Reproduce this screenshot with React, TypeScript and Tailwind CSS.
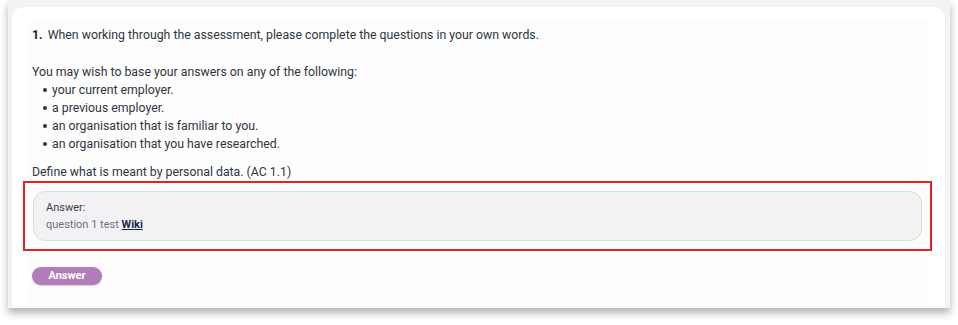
import React from "react";

const items = [
  "your current employer.",
  "a previous employer.",
  "an organisation that is familiar to you.",
  "an organisation that you have researched.",
];

export default function App() {
  return (
    <div className="w-[958px] h-[325px] bg-white" style={{ fontFamily: "Roboto, 'Liberation Sans', sans-serif" }}>
      <div className="ml-[8px] w-[942px] h-[308px] bg-[#f2f3f5] pt-[7px] pl-[4px] pr-[5px] shadow-[0_5px_8px_rgba(0,0,0,0.3)]">
        <div className="h-full bg-white rounded-t-[12px] pt-[14px] px-[15px]">
          <div className="h-full bg-[#fdfdfd] px-[5px] pt-[5px] text-[12.3px] leading-[18px] text-[#2f3640]">
            <p>
              <span className="font-bold text-[#1f2328]">1.</span>
              <span className="ml-[5px]">When working through the assessment, please complete the questions in your own words.</span>
            </p>
            <p className="mt-[19px]">You may wish to base your answers on any of the following:</p>
            <ul>
              {items.map((t) => (
                <li key={t} className="flex items-center">
                  <span className="ml-[11px] mr-[5px] w-[4px] h-[4px] rounded-full bg-[#2f3640]" />
                  <span>{t}</span>
                </li>
              ))}
            </ul>
            <p className="mt-[10px]">Define what is meant by personal data. (AC 1.1)</p>
            <div className="-ml-[9px] -mr-[7px] border-2 border-[#e8202a] px-[8px] pt-[8px] pb-[8px]">
              <div className="rounded-[12px] border border-[#dcdde0] bg-[#f2f2f4] px-[12px] pt-[7px] pb-[7px] text-[11px] leading-[17px]">
                <div className="text-[#3c4047]">Answer:</div>
                <div className="text-[#6b7380]">
                  question 1 test{" "}
                  <a className="font-bold underline text-[#1c2a4d]">Wiki</a>
                </div>
              </div>
            </div>
            <button className="mt-[16px] w-[70px] h-[18px] rounded-full bg-[#b17cb8] text-white text-[11px] font-bold leading-[18px] shadow-[0_1px_2px_rgba(0,0,0,0.2)]">
              Answer
            </button>
          </div>
        </div>
      </div>
    </div>
  );
}
